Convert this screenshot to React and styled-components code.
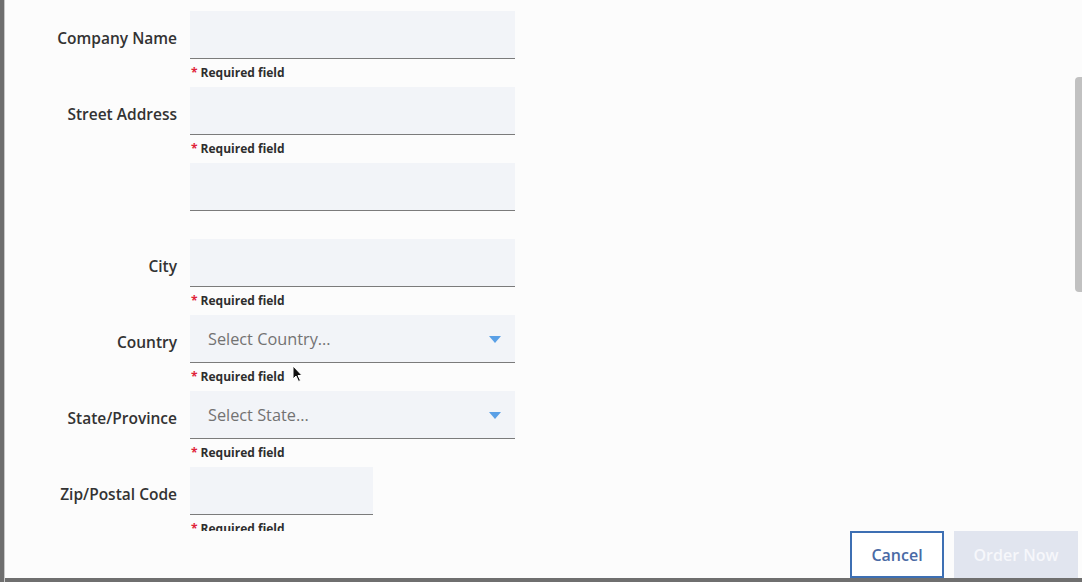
import React from 'react';
import styled, { createGlobalStyle } from 'styled-components';

const GlobalStyle = createGlobalStyle`
  html, body {
    margin: 0;
    padding: 0;
    background: #6f6f6f;
    overflow: hidden;
  }
  * {
    box-sizing: border-box;
  }
`;

const Screen = styled.div`
  display: flex;
  width: 1082px;
  height: 582px;
  background: #6f6f6f;
`;

const Backdrop = styled.div`
  width: 5px;
  flex-shrink: 0;
  border-right: 1px solid #c9c9c9;
`;

const Modal = styled.div`
  position: relative;
  flex: 1;
  height: 578px;
  display: flex;
  flex-direction: column;
  background: #fcfcfc;
  font-family: "Open Sans", "Noto Sans", sans-serif;
`;

const Body = styled.div`
  height: 531px;
  overflow: hidden;
  padding-top: 11px;
`;

const Form = styled.div`
  display: grid;
  grid-template-columns: 172px 325px;
  column-gap: 13px;
  grid-auto-rows: 76px;
`;

const Label = styled.label`
  margin-top: 17px;
  text-align: right;
  font-size: 15.5px;
  line-height: 20px;
  font-weight: 600;
  color: #333333;
`;

const Field = styled.div`
  display: flex;
  flex-direction: column;
`;

const Input = styled.input`
  width: ${props => props.$width || '325px'};
  height: 48px;
  border: none;
  border-bottom: 1px solid #7b7b7b;
  background: #f2f4f8;
  padding: 0 18px;
  font-family: inherit;
  font-size: 16px;
  color: #333;
  outline: none;
`;

const Select = styled.div`
  display: flex;
  align-items: center;
  justify-content: space-between;
  height: 48px;
  padding: 0 14px 0 18px;
  background: #f2f4f8;
  border-bottom: 1px solid #7b7b7b;
  font-size: 16.3px;
  color: #727272;
`;

const Caret = styled.span`
  width: 0;
  height: 0;
  margin-top: 2px;
  border-left: 6px solid transparent;
  border-right: 6px solid transparent;
  border-top: 7px solid #5aa0e6;
`;

const Helper = styled.div`
  margin-top: 6px;
  font-size: 12px;
  line-height: 16px;
  font-weight: 700;
  color: #2e2e2e;

  &::before {
    content: '*';
    color: #e0243a;
    margin: 0 3px 0 1px;
  }
`;

const Footer = styled.div`
  display: flex;
  justify-content: flex-end;
  gap: 10px;
  padding-right: 4px;
`;

const Button = styled.button`
  height: 47px;
  padding: 0;
  width: ${props => props.$width};
  font-family: inherit;
  font-size: 16px;
  font-weight: 600;
  cursor: pointer;
  border: ${props => props.$primary ? 'none' : '2px solid #3d6fb3'};
  background: ${props => props.$primary ? '#e1e5ef' : '#ffffff'};
  color: ${props => props.$primary ? '#f6f7fb' : '#4a6aa5'};
`;

const Scrollbar = styled.div`
  position: absolute;
  right: 0;
  top: 77px;
  width: 7px;
  height: 215px;
  border-radius: 4px 0 0 4px;
  background: #c1c1c1;
`;

const Pointer = styled.svg`
  position: absolute;
  left: 287px;
  top: 365px;
`;

const fields = [
  { label: 'Company Name', required: true },
  { label: 'Street Address', required: true },
  { label: '', required: false },
  { label: 'City', required: true },
  { label: 'Country', select: 'Select Country...', required: true },
  { label: 'State/Province', select: 'Select State...', required: true },
  { label: 'Zip/Postal Code', width: '183px', required: true },
];

const App = () => (
  <>
    <GlobalStyle />
    <Screen>
      <Backdrop />
      <Modal>
        <Body>
          <Form>
            {fields.map((f, i) => (
              <React.Fragment key={i}>
                <Label>{f.label}</Label>
                <Field>
                  {f.select ? (
                    <Select>
                      {f.select}
                      <Caret />
                    </Select>
                  ) : (
                    <Input $width={f.width} />
                  )}
                  {f.required && <Helper>Required field</Helper>}
                </Field>
              </React.Fragment>
            ))}
          </Form>
        </Body>
        <Footer>
          <Button $width="94px">Cancel</Button>
          <Button $primary $width="124px">Order Now</Button>
        </Footer>
        <Scrollbar />
        <Pointer width="12" height="18" viewBox="0 0 12 18">
          <path d="M1 1 L1 14 L4 11 L6.5 16.5 L8.5 15.5 L6 10.5 L10 10.5 Z" fill="#111" stroke="#fff" strokeWidth="1" />
        </Pointer>
      </Modal>
    </Screen>
  </>
);

export default App;
